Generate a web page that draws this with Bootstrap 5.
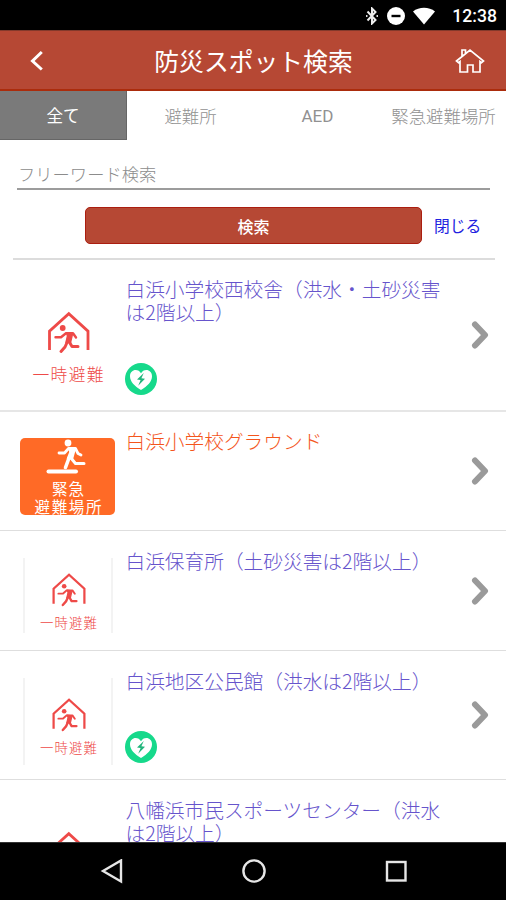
<!DOCTYPE html>
<html lang="ja">
<head>
<meta charset="utf-8">
<meta name="viewport" content="width=device-width, initial-scale=1">
<title>防災スポット検索</title>
<link rel="stylesheet" href="https://cdn.jsdelivr.net/npm/bootstrap@5.3.0/dist/css/bootstrap.min.css">
<style>
  body { font-family: "Noto Sans CJK JP", "Noto Sans", sans-serif; background: #fff; }
  svg { display: block; flex: none; }
  .screen { width: 506px; height: 900px; overflow: hidden; }
  .statusbar { height: 30px; padding: 2px 9px 0 0; font: 500 17.6px/28px Roboto, sans-serif; }
  .statusbar .wifi { margin: 0 17px 0 8px; }
  .appbar { height: 61px; background: #b64834; border-top: 1px solid #83392b; border-bottom: 2px solid #ab2c0c; padding: 0 21px 0 29px; }
  .appbar h1 { font-size: 24.8px; font-weight: 400; line-height: 58px; padding-left: 8px; }
  .tabs { height: 49px; }
  .tabs .nav-link { width: 127px; flex: none; padding: 0; font-size: 17.4px; line-height: 49px; color: #919191; font-weight: 300; white-space: nowrap; border-radius: 0; text-align: center; }
  .tabs .nav-link.active { background: #7a7a7a; color: #fff; border-right: 1px solid #666; border-bottom: 1px solid #666; font-weight: 400; font-size: 16.6px; }
  .tabs .nav-link.latin { font: 400 17px/51px Roboto, sans-serif; }
  .tabs .nav-link.wide { width: 125px; }
  .search { height: 120px; margin: 0 11px 0 13px; border-bottom: 2px solid #dcdcdc; padding-top: 18px; }
  .search .form-control { height: 32px; margin-left: 4px; width: 473px; padding: 1px 0 0 1px; border: 0; border-bottom: 2px solid #9c9c9c; border-radius: 0; font-size: 17.3px; font-weight: 300; box-shadow: none; }
  .search .form-control::placeholder { color: #8c8c8c; opacity: 1; }
  .search .actions { margin-top: 17px; }
  .search .btn { width: 337px; height: 37px; padding: 0; margin-left: 72px; background: #b64834; border: 1px solid #ab1e10; border-radius: 5px; color: #fff; font-size: 16px; font-weight: 500; line-height: 34px; }
  .search .close-link { color: #2222e0; font-size: 15.8px; margin-left: 12px; text-decoration: none; }
  .spots { height: 582px; overflow: hidden; }
  .spot { border-bottom: 1px solid #dedede; }
  .spot-1 { height: 152px; border-bottom: 2px solid #e6e6e6; }
  .spot-2 { height: 119px; }
  .spot-3 { height: 120px; }
  .spot-4 { height: 129px; }
  .spot-5 { height: 152px; }
  .thumb { width: 125px; flex: none; }
  .house { width: 96px; height: 80px; margin: 44px 0 0 20px; }
  .framed { width: 90px; margin: 27px 0 0 23px; height: 75px; border: solid #f3f3f3; border-width: 0 2px; }
  .framed .house { width: 76.8px; height: 64px; margin: 9px 0 0 4.5px; }
  .spot-4 .framed { height: 87px; }
  .spot-4 .framed .house { margin-top: 14px; }
  .evac { width: 95px; height: 77px; margin: 26px 0 0 20px; border-radius: 5px; }
  .spot-name { width: 320px; margin-top: 17px; padding-left: .5px; font-size: 19.7px; line-height: 23px; font-weight: 300; color: #6654cc; white-space: nowrap; }
  .spot-3 .spot-name, .spot-4 .spot-name, .spot-5 .spot-name { margin-top: 18px; }
  .spot-name.orange { color: #f4551c; }
  .aed { margin-top: 40px; }
  .spot-4 .aed { margin-top: 39px; }
  .chev { margin: auto 17px auto auto; }
  .navkeys { height: 58px; padding: 0 97px 0 99px; border-top: 1px solid #333; }
</style>
<script src="https://cdn.jsdelivr.net/npm/bootstrap@5.3.0/dist/js/bootstrap.bundle.min.js"></script>
</head>
<body>
<svg width="0" height="0" class="position-absolute">
  <symbol id="house" viewBox="0 0 96 80">
    <path d="M29.500 46V27.200L48.800 9.600 68 27.200V46" fill="none" stroke="#ee4a48" stroke-width="2.800"/>
    <circle cx="42.700" cy="24" r="2.900" fill="#ee4a48"/>
    <g fill="none" stroke="#ee4a48" stroke-linecap="round" stroke-linejoin="round">
      <path d="M35.500 33.300H41L46 29.200H53L56 33.500" stroke-width="2.400"/>
      <path d="M46.500 28.800L52.500 29.800 50.500 38.500H46L47.500 32z" fill="#ee4a48" stroke-width="1.500"/>
      <path d="M49 37.500L52 42.600H58" stroke-width="3"/>
      <path d="M47.500 37.500L45 43 41 47.500" stroke-width="3"/>
    </g>
    <text x="12.500" y="76.500" font-size="16.800" font-weight="300" fill="#ee4a48" textLength="71" lengthAdjust="spacing">一時避難</text>
  </symbol>
  <symbol id="aed" viewBox="0 0 32 32">
    <circle cx="16" cy="16" r="16" fill="#16d98b"/>
    <path d="M16 27C9.500 23 5 18.500 5 13.200 5 9.300 7.700 7 10.600 7c2.300 0 4.300 1.200 5.400 3.300C17.100 8.200 19.100 7 21.400 7 24.300 7 27 9.300 27 13.200 27 18.500 22.500 23 16 27z" fill="#fff"/>
    <path d="M18.800 10L12 16.600l3.600.5L13.200 22.800 20 15.800l-3.600-.5z" fill="#22b57c"/>
  </symbol>
  <symbol id="chev" viewBox="0 0 18 30">
    <path d="M4 4.500L14 15 4 25.500" fill="none" stroke="#9a9a9a" stroke-width="6" stroke-linecap="round" stroke-linejoin="round"/>
  </symbol>
</svg>
<div class="screen d-flex flex-column">
  <div class="statusbar bg-black text-white d-flex align-items-center justify-content-end">
    <svg width="14" height="18" viewBox="0 0 14 18"><path d="M2.500 4.500L10.500 13 7 16.500V1.500L10.500 5 2.500 13.500" fill="none" stroke="#eee" stroke-width="2"/><path d="M1 9h1.500M11.500 9H13" stroke="#ddd" stroke-width="2"/></svg>
    <svg class="ms-2" width="18" height="18" viewBox="0 0 18 18"><circle cx="9" cy="9" r="9" fill="#fff"/><path d="M4.500 9h9" stroke="#000" stroke-width="2.400"/></svg>
    <svg class="wifi" width="22" height="18" viewBox="0 0 22 18"><path d="M0 4.500C6-.5 16-.5 22 4.500L11 17.500z" fill="#fff"/></svg>
    <span>12:38</span>
  </div>
  <header class="appbar d-flex align-items-center justify-content-between text-white">
    <svg width="15" height="22" viewBox="0 0 15 22"><path d="M12.800 3L3.500 12l9.300 8.500" fill="none" stroke="#fff" stroke-width="3"/></svg>
    <h1 class="m-0">防災スポット検索</h1>
    <svg width="30" height="26" viewBox="0 0 30 26"><path d="M1.500 14L15 3 28.500 14 26.500 15.700 25 14.500V25H18V18H12.500V25H5V14.500L3.500 15.700zM7 9V3h3.500V6" fill="none" stroke="#fff" stroke-width="1.700"/></svg>
  </header>
  <nav class="tabs nav flex-nowrap">
    <a class="nav-link active" href="#">全て</a>
    <a class="nav-link" href="#">避難所</a>
    <a class="nav-link latin" href="#">AED</a>
    <a class="nav-link wide" href="#">緊急避難場所</a>
  </nav>
  <form class="search">
    <input class="form-control" type="text" placeholder="フリーワード検索">
    <div class="actions d-flex align-items-center">
      <button class="btn" type="button">検索</button>
      <a class="close-link" href="#">閉じる</a>
    </div>
  </form>
  <main class="spots">
    <div class="spot spot-1 d-flex">
      <div class="thumb"><svg class="house"><use href="#house"/></svg></div>
      <div><div class="spot-name">白浜小学校西校舎（洪水・土砂災害<br>は2階以上）</div><svg class="aed" width="32" height="32"><use href="#aed"/></svg></div>
      <svg class="chev" width="18" height="30"><use href="#chev"/></svg>
    </div>
    <div class="spot spot-2 d-flex">
      <div class="thumb">
        <svg class="evac" viewBox="0 0 95 77">
          <rect width="95" height="77" fill="#ff6a26"/>
          <circle cx="48" cy="5" r="3.400" fill="#fff"/>
          <g fill="none" stroke="#fff" stroke-linecap="round" stroke-linejoin="round">
            <path d="M39 15h5.500l4-4.500h7l2.500 5 3 1.500" stroke-width="2.800"/>
            <path d="M49 10.500L55 11.500 52.500 20.500H47.500L50 14z" fill="#fff" stroke-width="1.500"/>
            <path d="M50.500 19.500l5 6h8.500" stroke-width="3"/>
            <path d="M49 20L45.500 29.500" stroke-width="3.600"/>
            <path d="M28.500 33.500H56" stroke-width="4"/>
          </g>
          <g fill="#fff" font-size="15.500" font-weight="400">
            <text x="32" y="57" textLength="32">緊急</text>
            <text x="14.500" y="75" textLength="67">避難場所</text>
          </g>
        </svg>
      </div>
      <div class="spot-name orange">白浜小学校グラウンド</div>
      <svg class="chev" width="18" height="30"><use href="#chev"/></svg>
    </div>
    <div class="spot spot-3 d-flex">
      <div class="thumb"><div class="framed d-flex"><svg class="house"><use href="#house"/></svg></div></div>
      <div class="spot-name">白浜保育所（土砂災害は2階以上）</div>
      <svg class="chev" width="18" height="30"><use href="#chev"/></svg>
    </div>
    <div class="spot spot-4 d-flex">
      <div class="thumb"><div class="framed d-flex"><svg class="house"><use href="#house"/></svg></div></div>
      <div><div class="spot-name">白浜地区公民館（洪水は2階以上）</div><svg class="aed" width="32" height="32"><use href="#aed"/></svg></div>
      <svg class="chev" width="18" height="30"><use href="#chev"/></svg>
    </div>
    <div class="spot spot-5 d-flex">
      <div class="thumb"><svg class="house"><use href="#house"/></svg></div>
      <div class="spot-name">八幡浜市民スポーツセンター（洪水<br>は2階以上）</div>
    </div>
  </main>
  <footer class="navkeys bg-black d-flex align-items-center justify-content-between">
    <svg width="26" height="26" viewBox="0 0 26 26"><path d="M22 1.500V22.500L4 12z" fill="none" stroke="#e6e6e6" stroke-width="2.400"/></svg>
    <svg width="26" height="26" viewBox="0 0 26 26"><circle cx="13" cy="12" r="10.600" fill="none" stroke="#e6e6e6" stroke-width="2.400"/></svg>
    <svg width="26" height="26" viewBox="0 0 26 26"><rect x="4" y="3" width="18.500" height="18.500" fill="none" stroke="#e6e6e6" stroke-width="2.400"/></svg>
  </footer>
</div>
</body>
</html>
